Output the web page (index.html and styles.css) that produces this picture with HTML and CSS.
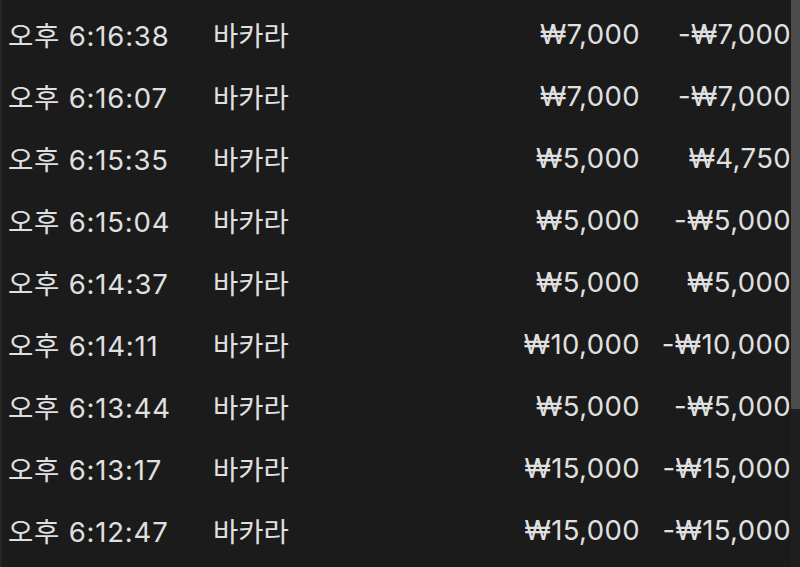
FILE: index.html
```html
<!DOCTYPE html>
<html lang="ko">
<head>
<meta charset="utf-8">
<link rel="stylesheet" href="styles.css">
</head>
<body>
<div class="screen">
  <div class="edge"></div>
  <ul class="list">
    <li class="row"><span class="time">오후 6:16:38</span><span class="game">바카라</span><span class="bet">₩7,000</span><span class="result">-₩7,000</span></li>
    <li class="row"><span class="time">오후 6:16:07</span><span class="game">바카라</span><span class="bet">₩7,000</span><span class="result">-₩7,000</span></li>
    <li class="row"><span class="time">오후 6:15:35</span><span class="game">바카라</span><span class="bet">₩5,000</span><span class="result">₩4,750</span></li>
    <li class="row"><span class="time">오후 6:15:04</span><span class="game">바카라</span><span class="bet">₩5,000</span><span class="result">-₩5,000</span></li>
    <li class="row"><span class="time">오후 6:14:37</span><span class="game">바카라</span><span class="bet">₩5,000</span><span class="result">₩5,000</span></li>
    <li class="row"><span class="time">오후 6:14:11</span><span class="game">바카라</span><span class="bet">₩10,000</span><span class="result">-₩10,000</span></li>
    <li class="row"><span class="time">오후 6:13:44</span><span class="game">바카라</span><span class="bet">₩5,000</span><span class="result">-₩5,000</span></li>
    <li class="row"><span class="time">오후 6:13:17</span><span class="game">바카라</span><span class="bet">₩15,000</span><span class="result">-₩15,000</span></li>
    <li class="row"><span class="time">오후 6:12:47</span><span class="game">바카라</span><span class="bet">₩15,000</span><span class="result">-₩15,000</span></li>
  </ul>
  <div class="scrollbar"><div class="thumb"></div></div>
</div>
</body>
</html>
```
FILE: styles.css
```css
html, body {
  margin: 0;
  padding: 0;
  background: #1b1b1b;
}
.screen {
  display: flex;
  width: 800px;
  height: 567px;
  overflow: hidden;
  background: #1b1b1b;
}
.edge {
  width: 2px;
  flex: none;
  background: #262626;
}
.list {
  list-style: none;
  margin: 0;
  padding: 3px 0 0 6px;
  flex: 1;
  font-family: "Inter", "Noto Sans CJK KR", sans-serif;
  font-size: 27.5px;
  font-weight: 400;
  letter-spacing: 0.4px;
  color: #e0e0e0;
}
.row {
  display: grid;
  grid-template-columns: 205px 150px 277px 151px;
  height: 62px;
  align-items: center;
  white-space: nowrap;
}
.time {
  letter-spacing: 0.8px;
}
.game {
  font-family: "Noto Sans CJK KR", sans-serif;
  letter-spacing: 0;
}
.bet, .result {
  text-align: right;
}
.scrollbar {
  width: 9px;
  flex: none;
  background: #1f1f1f;
}
.thumb {
  height: 409px;
  background: #4b4b4b;
}
```
